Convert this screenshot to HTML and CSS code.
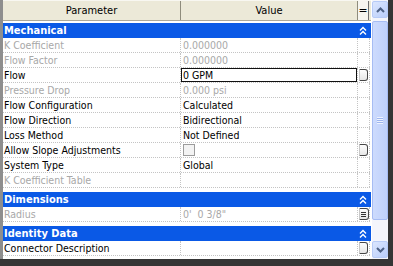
FILE: index.html
```html
<!DOCTYPE html>
<html lang="en">
<head>
    <meta charset="UTF-8">
    <title>Element Properties</title>
    <link rel="stylesheet" href="styles.css">
</head>
<body>
<div class="window">
    <div class="grid">
        <div class="head">
            <div class="hcell name">Parameter</div>
            <div class="hcell val">Value</div>
            <div class="hcell side">=</div>
        </div>

        <!-- Mechanical -->
        <div class="group first">
            <div class="band">
                <span class="title">Mechanical</span>
                <span class="fold"><svg width="8" height="9" viewBox="0 0 8 9"><path d="M1 4.5 L4 1.5 L7 4.5 M1 8.5 L4 5.5 L7 8.5" stroke="#fff" stroke-width="1.4" fill="none"/></svg></span>
            </div>
            <div class="row dis"><div class="name">K Coefficient</div><div class="val">0.000000</div><div class="side"></div></div>
            <div class="row dis"><div class="name">Flow Factor</div><div class="val">0.000000</div><div class="side"></div></div>
            <div class="row"><div class="name">Flow</div><div class="val edit">0 GPM</div><div class="side"><span class="btn"></span></div></div>
            <div class="row dis"><div class="name">Pressure Drop</div><div class="val">0.000 psi</div><div class="side"></div></div>
            <div class="row"><div class="name">Flow Configuration</div><div class="val">Calculated</div><div class="side"></div></div>
            <div class="row"><div class="name">Flow Direction</div><div class="val">Bidirectional</div><div class="side"></div></div>
            <div class="row"><div class="name">Loss Method</div><div class="val">Not Defined</div><div class="side"></div></div>
            <div class="row"><div class="name">Allow Slope Adjustments</div><div class="val"><span class="check"></span></div><div class="side"><span class="btn"></span></div></div>
            <div class="row"><div class="name">System Type</div><div class="val">Global</div><div class="side"></div></div>
            <div class="row dis"><div class="name">K Coefficient Table</div><div class="val"></div><div class="side"></div></div>
        </div>

        <!-- Dimensions -->
        <div class="group">
            <div class="band">
                <span class="title">Dimensions</span>
                <span class="fold"><svg width="8" height="9" viewBox="0 0 8 9"><path d="M1 4.5 L4 1.5 L7 4.5 M1 8.5 L4 5.5 L7 8.5" stroke="#fff" stroke-width="1.4" fill="none"/></svg></span>
            </div>
            <div class="row dis"><div class="name">Radius</div><div class="val">0'&nbsp; 0 3/8"</div><div class="side"><span class="btn lines"><i></i><i></i><i></i></span></div></div>
        </div>

        <!-- Identity Data -->
        <div class="group">
            <div class="band">
                <span class="title">Identity Data</span>
                <span class="fold"><svg width="8" height="9" viewBox="0 0 8 9"><path d="M1 4.5 L4 1.5 L7 4.5 M1 8.5 L4 5.5 L7 8.5" stroke="#fff" stroke-width="1.4" fill="none"/></svg></span>
            </div>
            <div class="row"><div class="name">Connector Description</div><div class="val"></div><div class="side"><span class="btn"></span></div></div>
        </div>
    </div>

    <div class="scroll">
        <div class="sb-btn up"><svg width="9" height="6" viewBox="0 0 9 6"><path d="M1 5 L4.5 1.5 L8 5" stroke="#4d6185" stroke-width="2" fill="none"/></svg></div>
        <div class="thumb"><span class="grip"></span></div>
        <div class="track"></div>
        <div class="sb-btn down"><svg width="9" height="6" viewBox="0 0 9 6"><path d="M1 1 L4.5 4.5 L8 1" stroke="#4d6185" stroke-width="2" fill="none"/></svg></div>
    </div>
</div>
</body>
</html>
```

FILE: styles.css
```css
body {
    margin: 0;
    background: #353535;
    font-family: "DejaVu Sans Condensed", "Liberation Sans", sans-serif;
    font-stretch: condensed;
    font-size: 10.5px;
    color: #000;
}

.window {
    display: flex;
    width: 385px;
    height: 259px;
    border-left: 3px solid #8e8e8e;
    background: #fff;
}

.grid {
    width: 368px;
    display: flex;
    flex-direction: column;
}

/* column header */
.head {
    display: flex;
    height: 19px;
    background: #ece9d8;
    border-top: 1px solid #f8f7f1;
    border-bottom: 1px solid #aca899;
    font-size: 11px;
}

.hcell {
    display: flex;
    align-items: center;
    justify-content: center;
    box-sizing: border-box;
    border-right: 1px solid #8f8c7c;
}

.hcell.name { width: 178px; }
.hcell.val { width: 177px; }

.hcell.side {
    width: 11px;
    background: #f6f5ef;
    border-right: 1px solid #6f6f6f;
    font-size: 12px;
    padding-bottom: 1px;
}

/* groups */
.group { margin-top: 4px; }
.group.first { margin-top: 2px; }

.band {
    display: flex;
    align-items: center;
    height: 15px;
    background: #0a59e6;
    color: #fff;
    font-weight: bold;
    font-size: 11px;
    padding-left: 1px;
}

.fold {
    margin-left: auto;
    width: 13px;
    display: flex;
    align-items: center;
    padding-left: 1px;
    box-sizing: border-box;
}

.row {
    display: flex;
    width: 367px;
    height: 14px;
    line-height: 15px;
    border-bottom: 1px dotted #c4c4c4;
}

.row > div {
    box-sizing: border-box;
    white-space: nowrap;
    overflow: hidden;
}

.row .name {
    width: 178px;
    padding-left: 1px;
    border-right: 1px dotted #c4c4c4;
}

.row .val {
    width: 177px;
    padding-left: 2px;
    border-right: 1px dotted #c4c4c4;
    display: flex;
    align-items: center;
}

.row .side {
    width: 12px;
    border-right: 1px dotted #c4c4c4;
    display: flex;
    align-items: center;
}

.row.dis { color: #a8a8a8; }

.val.edit {
    box-shadow: inset 0 0 0 1px #111;
}

.check {
    width: 10px;
    height: 10px;
    border: 1px solid #9c9c9c;
    background: #f3f3f3;
}

.btn {
    display: block;
    width: 7px;
    height: 10px;
    margin-left: 1px;
    border: 1px solid #464646;
    border-left-color: #c8c8c8;
    border-radius: 0 3px 3px 0;
    background: linear-gradient(#fdfdfd, #e6e6e6);
}

.btn.lines {
    display: flex;
    flex-direction: column;
    justify-content: center;
    gap: 1px;
    padding-left: 1px;
}

.btn.lines i {
    display: block;
    width: 5px;
    height: 1px;
    background: #333;
}

/* scrollbar */
.scroll {
    width: 16px;
    margin-left: 1px;
    display: flex;
    flex-direction: column;
    background: #f4f5fb;
}

.sb-btn {
    height: 15px;
    border: 1px solid #b7cbf7;
    border-radius: 2px;
    background: linear-gradient(135deg, #dbe6fe, #b9cdfa);
    display: flex;
    align-items: center;
    justify-content: center;
}

.sb-btn.up { margin-top: 1px; }
.sb-btn.down { margin-bottom: 1px; }

.thumb {
    margin-top: 3px;
    height: 197px;
    border: 1px solid #a6bcf3;
    border-radius: 2px;
    background: linear-gradient(90deg, #cddbfd, #bed0fb);
    display: flex;
    align-items: center;
    justify-content: center;
}

.grip {
    width: 6px;
    height: 7px;
    background: repeating-linear-gradient(#eef3fe 0 1px, #9db5ef 1px 2px);
}

.track { flex: 1; }
```
